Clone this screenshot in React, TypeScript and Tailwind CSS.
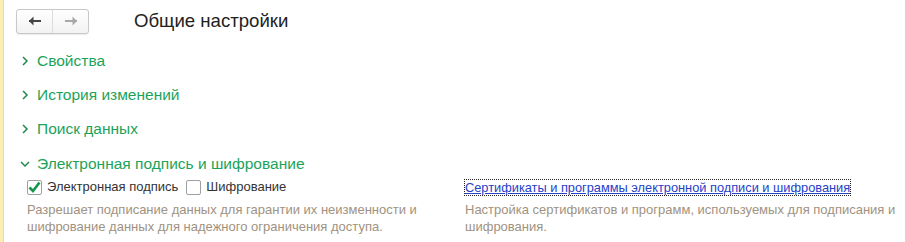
import React from 'react';

const font = { fontFamily: '"Liberation Sans", Arial, sans-serif' };

const Chevron = ({ open }: { open?: boolean }) => (
  <svg width="10" height="10" viewBox="0 0 10 10" className="shrink-0">
    {open ? (
      <path d="M1 3 L5 7 L9 3" fill="none" stroke="#1c8a4e" strokeWidth="1.5" />
    ) : (
      <path d="M3 1 L7 5 L3 9" fill="none" stroke="#1c8a4e" strokeWidth="1.5" />
    )}
  </svg>
);

const Section = ({ title, open }: { title: string; open?: boolean }) => (
  <div className="flex items-center gap-[7px] h-[20px] text-[15.5px] text-[#1ba35a] leading-none">
    <Chevron open={open} />
    <span>{title}</span>
  </div>
);

const Checkbox = ({ checked, label }: { checked?: boolean; label: string }) => (
  <label className="flex items-center gap-[5px] text-[13px] text-[#333]">
    <span className="w-[15px] h-[15px] border border-[#a0a0a0] rounded-[2px] bg-white flex items-center justify-center">
      {checked && (
        <svg width="13" height="12" viewBox="0 0 13 12">
          <path d="M1.5 6.5 L5 10 L11.5 1.5" fill="none" stroke="#16964a" strokeWidth="2.6" />
        </svg>
      )}
    </span>
    <span>{label}</span>
  </label>
);

export default function App() {
  return (
    <div className="w-[905px] h-[242px] bg-white flex overflow-hidden" style={font}>
      <div className="w-[4px] bg-[#fbeeb0] border-r border-[#f0dc8a]" />
      <div className="flex-1 flex flex-col">
        <div className="flex items-center h-[41px] pl-[12px] pt-[1px]">
          <div className="flex h-[25px] w-[73px] border border-[#c8c8c8] rounded-[3px] bg-gradient-to-b from-white to-[#f2f2f2] shadow-[0_1px_1px_rgba(0,0,0,0.08)]">
            <div className="flex-1 flex items-center justify-center border-r border-[#dcdcdc]">
              <svg width="14" height="10" viewBox="0 0 14 10">
                <path d="M1 5 H13" stroke="#444" strokeWidth="2" />
                <path d="M5.5 0.5 L1 5 L5.5 9.5 Z" fill="#444" />
              </svg>
            </div>
            <div className="flex-1 flex items-center justify-center">
              <svg width="14" height="10" viewBox="0 0 14 10">
                <path d="M1 5 H13" stroke="#a8a8a8" strokeWidth="2" />
                <path d="M8.5 0.5 L13 5 L8.5 9.5 Z" fill="#a8a8a8" />
              </svg>
            </div>
          </div>
          <div className="ml-[45px] text-[18.6px] text-[#222]">Общие настройки</div>
        </div>
        <div className="flex flex-col pl-[16px] pt-[10px] gap-[14px]">
          <Section title="Свойства" />
          <Section title="История изменений" />
          <Section title="Поиск данных" />
        </div>
        <div className="pl-[16px] mt-[15px]">
          <Section title="Электронная подпись и шифрование" open />
        </div>
        <div className="grid grid-cols-[438px_1fr] pl-[23px] mt-[4px]">
          <div className="flex flex-col">
            <div className="flex items-center gap-[8px] h-[18px]">
              <Checkbox checked label="Электронная подпись" />
              <Checkbox label="Шифрование" />
            </div>
            <p className="mt-[5px] text-[13px] leading-[17px] text-[#a09281] w-[400px]">
              Разрешает подписание данных для гарантии их неизменности и шифрование данных для надежного ограничения доступа.
            </p>
          </div>
          <div className="flex flex-col">
            <div className="h-[18px] flex items-center">
              <a className="text-[12.8px] text-[#2541c8] underline outline-1 outline-dotted outline-[#222] leading-[15px]">
                Сертификаты и программы электронной подписи и шифрования
              </a>
            </div>
            <p className="mt-[5px] text-[13px] leading-[17px] text-[#a09281] w-[432px]">
              Настройка сертификатов и программ, используемых для подписания и шифрования.
            </p>
          </div>
        </div>
      </div>
    </div>
  );
}
